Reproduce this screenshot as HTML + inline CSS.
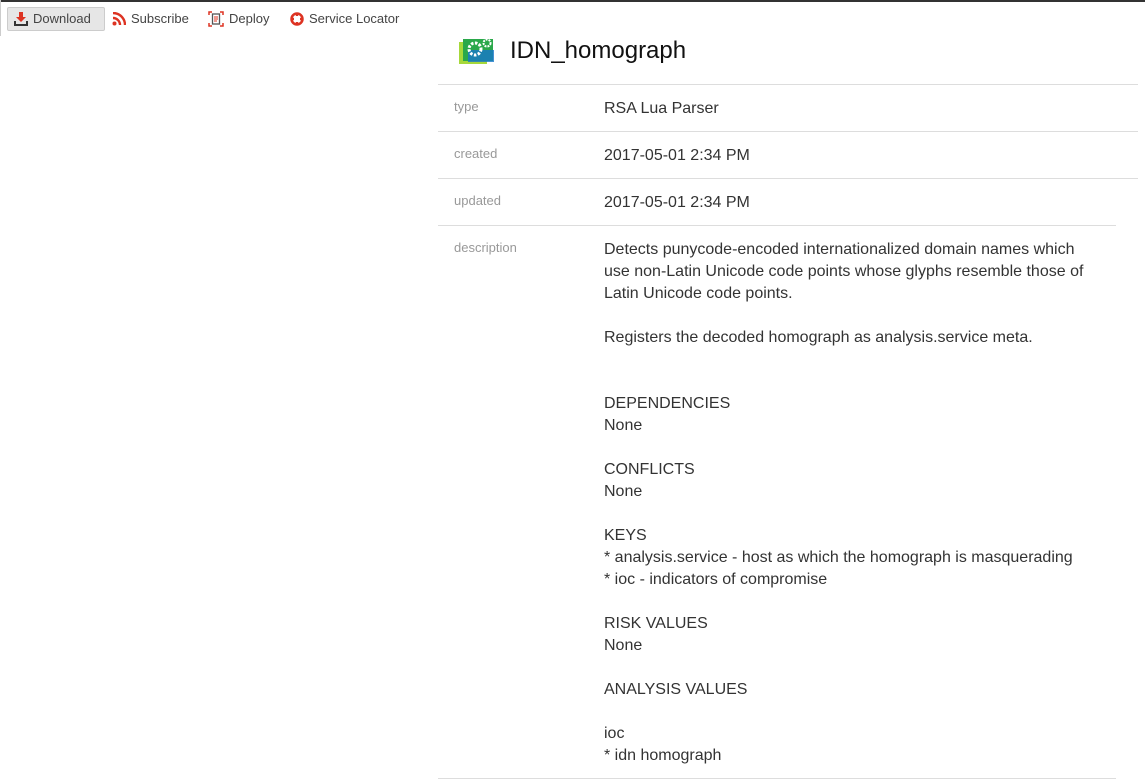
<!DOCTYPE html>
<html><head><meta charset="utf-8"><style>
body{margin:0;width:1145px;height:779px;background:#fff;font-family:"Liberation Sans",sans-serif;color:#333;position:relative;overflow:hidden}
.top{position:absolute;left:0;top:0;width:1145px;height:2px;background:#333}
.lb{position:absolute;left:0;top:0;width:1px;height:36px;background:#ccc}
.tb{position:absolute;top:7px;height:24px;font-size:13px;color:#444;line-height:24px;display:flex;align-items:center}
.btn{left:7px;width:98px;background:#e6e6e6;border:1px solid #ccc;border-radius:2px;padding-left:6px;box-sizing:border-box}
.tb svg{margin-right:5px}
.title{position:absolute;left:458px;top:36px;font-size:24px;color:#111;display:flex;align-items:center}
.title span{margin-left:14px}
.row{position:absolute;left:438px;width:700px;border-top:1px solid #ddd}
.lab{position:absolute;left:16px;font-size:13px;color:#999}
.val{position:absolute;left:166px;font-size:16px;color:#333;line-height:22px}
</style></head><body>
<div class="top"></div><div class="lb"></div>
<div class="tb btn"><svg width="14" height="14" viewBox="0 0 14 14"><path d="M5 0h4v5h3l-5 5-5-5h3z" fill="#d32"/><path d="M1 9v4h12V9" stroke="#333" stroke-width="2" fill="none"/></svg>Download</div>
<div class="tb" style="left:112px"><svg width="14" height="14" viewBox="0 0 14 14"><circle cx="2.5" cy="11.5" r="2" fill="#d32"/><path d="M1 6a7 7 0 0 1 7 7M1 1a12 12 0 0 1 12 12" stroke="#d32" stroke-width="2.4" fill="none"/></svg>Subscribe</div>
<div class="tb" style="left:208px"><svg width="16" height="16" viewBox="0 0 16 16"><path d="M1 4V1h3M12 1h3v3M15 12v3h-3M4 15H1v-3" stroke="#d32" stroke-width="1.5" fill="none"/><rect x="4.5" y="3" width="7" height="10" fill="none" stroke="#555" stroke-width="1.3"/><path d="M6 6h4M6 8h4M6 10h3" stroke="#d32"/></svg>Deploy</div>
<div class="tb" style="left:290px"><svg width="14" height="14" viewBox="0 0 14 14"><circle cx="7" cy="7" r="5.5" fill="none" stroke="#d32" stroke-width="2.5"/><path d="M7 1v3M7 10v3M1 7h3M10 7h3" stroke="#d32" stroke-width="2.5"/></svg>Service Locator</div>
<div class="title"><svg width="38" height="30" viewBox="0 0 38 30"><rect x="1" y="6" width="28" height="22" fill="#a6d83a"/><rect x="5" y="3" width="30" height="22" fill="#2aa84a"/><rect x="10" y="14" width="26" height="12" fill="#1877c9" opacity=".8"/><circle cx="17" cy="13" r="6" fill="none" stroke="#fff" stroke-width="3" stroke-dasharray="2.5 1.5"/><circle cx="29" cy="7" r="3.5" fill="none" stroke="#fff" stroke-width="2" stroke-dasharray="2 1"/></svg><span>IDN_homograph</span></div>
<div class="row" style="top:84px;height:47px"><div class="lab" style="top:14px">type</div><div class="val" style="top:13px">RSA Lua Parser</div></div>
<div class="row" style="top:131px;height:47px"><div class="lab" style="top:14px">created</div><div class="val" style="top:13px">2017-05-01 2:34 PM</div></div>
<div class="row" style="top:178px;height:47px"><div class="lab" style="top:14px">updated</div><div class="val" style="top:13px">2017-05-01 2:34 PM</div></div>
<div class="row" style="top:225px;height:552px;width:678px;border-bottom:1px solid #ddd"><div class="lab" style="top:14px">description</div><div class="val" style="top:13px;width:490px">Detects punycode-encoded internationalized domain names which use non-Latin Unicode code points whose glyphs resemble those of Latin Unicode code points.<br><br>Registers the decoded homograph as analysis.service meta.<br><br><br>DEPENDENCIES<br>None<br><br>CONFLICTS<br>None<br><br>KEYS<br>* analysis.service - host as which the homograph is masquerading<br>* ioc - indicators of compromise<br><br>RISK VALUES<br>None<br><br>ANALYSIS VALUES<br><br>ioc<br>* idn homograph</div></div>
</body></html>
